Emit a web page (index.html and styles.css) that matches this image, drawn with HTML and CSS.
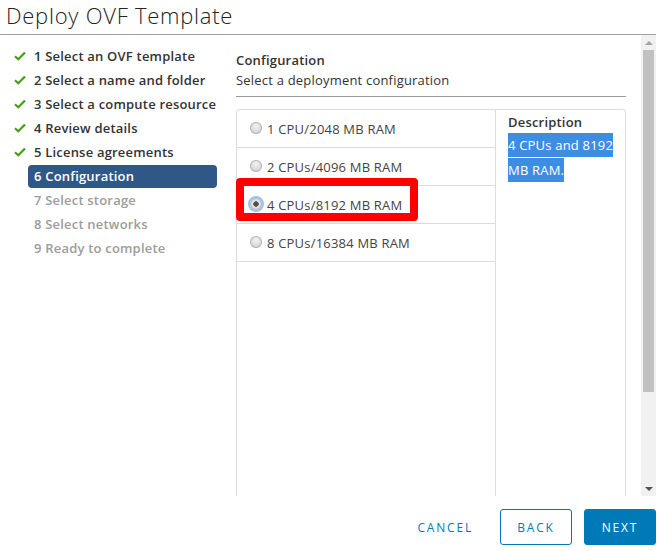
FILE: index.html
```html
<!DOCTYPE html>
<html>
<head>
<meta charset="utf-8">
<link rel="stylesheet" href="styles.css">
</head>
<body>
<div class="dialog">
  <header class="title">Deploy OVF Template</header>
  <div class="main">
    <nav class="steps">
      <div class="step done"><span class="ico"><svg width="12" height="10" viewBox="0 0 12 10"><path d="M1 5.2 L4.3 8.3 L11 1.4" fill="none" stroke="#4a9d17" stroke-width="2.2"/></svg></span><span class="lbl">1 Select an OVF template</span></div>
      <div class="step done"><span class="ico"><svg width="12" height="10" viewBox="0 0 12 10"><path d="M1 5.2 L4.3 8.3 L11 1.4" fill="none" stroke="#4a9d17" stroke-width="2.2"/></svg></span><span class="lbl">2 Select a name and folder</span></div>
      <div class="step done"><span class="ico"><svg width="12" height="10" viewBox="0 0 12 10"><path d="M1 5.2 L4.3 8.3 L11 1.4" fill="none" stroke="#4a9d17" stroke-width="2.2"/></svg></span><span class="lbl">3 Select a compute resource</span></div>
      <div class="step done"><span class="ico"><svg width="12" height="10" viewBox="0 0 12 10"><path d="M1 5.2 L4.3 8.3 L11 1.4" fill="none" stroke="#4a9d17" stroke-width="2.2"/></svg></span><span class="lbl">4 Review details</span></div>
      <div class="step done"><span class="ico"><svg width="12" height="10" viewBox="0 0 12 10"><path d="M1 5.2 L4.3 8.3 L11 1.4" fill="none" stroke="#4a9d17" stroke-width="2.2"/></svg></span><span class="lbl">5 License agreements</span></div>
      <div class="step active"><span class="ico"></span><span class="lbl">6 Configuration</span></div>
      <div class="step todo"><span class="ico"></span><span class="lbl">7 Select storage</span></div>
      <div class="step todo"><span class="ico"></span><span class="lbl">8 Select networks</span></div>
      <div class="step todo"><span class="ico"></span><span class="lbl">9 Ready to complete</span></div>
    </nav>
    <section class="content">
      <div class="head">
        <div class="h-title">Configuration</div>
        <div class="h-sub">Select a deployment configuration</div>
      </div>
      <div class="table">
        <div class="options">
          <div class="opt"><span class="radio"></span><span>1 CPU/2048 MB RAM</span></div>
          <div class="opt"><span class="radio"></span><span>2 CPUs/4096 MB RAM</span></div>
          <div class="opt marked"><span class="radio checked"></span><span>4 CPUs/8192 MB RAM</span><span class="redbox"></span></div>
          <div class="opt"><span class="radio"></span><span>8 CPUs/16384 MB RAM</span></div>
        </div>
        <div class="desc">
          <div class="d-title">Description</div>
          <div class="d-text"><span class="sel">4 CPUs and 8192</span><br><span class="sel">MB RAM.</span></div>
        </div>
      </div>
    </section>
    <div class="scrollbar">
      <span class="arrow up"></span>
      <div class="track"><div class="thumb"></div></div>
      <span class="arrow down"></span>
    </div>
  </div>
  <footer class="actions">
    <button class="btn flat">CANCEL</button>
    <button class="btn outline">BACK</button>
    <button class="btn primary">NEXT</button>
  </footer>
</div>
</body>
</html>
```
FILE: styles.css
```css
html, body {
  margin: 0;
  padding: 0;
  background: #fff;
}
body {
  font-family: "Open Sans", "Liberation Sans", sans-serif;
  color: #333;
}
.dialog {
  width: 656px;
  display: flex;
  flex-direction: column;
}
.title {
  height: 34px;
  border-bottom: 1px solid #a0a0a0;
  padding-left: 6px;
  font-size: 22px;
  font-weight: 300;
  letter-spacing: 0.75px;
  line-height: 30px;
  color: #222;
}
.main {
  height: 461px;
  display: flex;
  overflow: hidden;
}
.steps {
  width: 236px;
  flex: none;
  padding-top: 9px;
  box-sizing: border-box;
}
.step {
  display: flex;
  height: 24px;
  align-items: center;
}
.ico {
  width: 28px;
  flex: none;
  display: flex;
  padding-left: 14px;
  box-sizing: border-box;
}
.lbl {
  width: 189px;
  height: 23px;
  line-height: 23px;
  padding-left: 6px;
  box-sizing: border-box;
  font-size: 13px;
  font-weight: 600;
  letter-spacing: 0.2px;
  border-radius: 4px;
  color: #333;
}
.active .lbl {
  background: #2f5886;
  color: #fff;
}
.todo .lbl {
  color: #9c9c9c;
}
.content {
  width: 390px;
  flex: none;
  padding-top: 15px;
  letter-spacing: 0.2px;
}
.head {
  border-bottom: 1px solid #9a9a9a;
  padding-bottom: 6px;
}
.h-title {
  font-size: 13px;
  font-weight: 600;
  line-height: 20px;
  color: #333;
}
.h-sub {
  font-size: 13px;
  line-height: 20px;
  color: #333;
}
.table {
  margin-top: 12px;
  border: 1px solid #dcdcdc;
  border-radius: 3px;
  height: 420px;
  display: flex;
}
.options {
  width: 258px;
  border-right: 1px solid #dcdcdc;
  flex: none;
}
.opt {
  position: relative;
  height: 37px;
  border-bottom: 1px solid #dcdcdc;
  display: flex;
  align-items: center;
  gap: 5px;
  padding-left: 13px;
  font-size: 13px;
  color: #444;
}
.radio {
  width: 12px;
  height: 12px;
  border-radius: 50%;
  background: radial-gradient(circle at 50% 35%, #f2f2f2 0%, #dadada 55%, #c4c4c4 100%);
  box-shadow: inset 0 0 0 1px #b8b8b8;
  flex: none;
  margin-top: -2px;
}
.radio.checked {
  background: radial-gradient(circle, #555 0, #555 2.5px, #e6e6e6 3px, #cfcfcf 100%);
  outline: 2px solid #9cc3f0;
  outline-offset: 0;
  border-radius: 50%;
}
.redbox {
  position: absolute;
  left: -1px;
  top: -8px;
  width: 182px;
  height: 43px;
  box-sizing: border-box;
  border: 8px solid #ff0000;
  border-radius: 4px;
}
.desc {
  flex: 1;
  padding: 2px 0 0 12px;
}
.d-title {
  font-size: 13px;
  font-weight: 600;
  line-height: 21px;
  color: #333;
}
.d-text {
  font-size: 13px;
  line-height: 0;
}
.sel {
  display: inline-block;
  line-height: 24px;
  background: #3d8ee3;
  color: #fff;
  margin-bottom: 1px;
}
.scrollbar {
  margin-left: 15px;
  width: 15px;
  flex: none;
  background: #f1f1f1;
  display: flex;
  flex-direction: column;
  align-items: center;
}
.arrow {
  width: 0;
  height: 0;
  border-left: 4px solid transparent;
  border-right: 4px solid transparent;
  margin: 6px 0 5px;
}
.arrow.up {
  border-bottom: 4px solid #a3a3a3;
}
.arrow.down {
  border-top: 4px solid #505050;
}
.track {
  flex: 1;
  width: 11px;
}
.thumb {
  height: 342px;
  background: #c1c1c1;
}
.actions {
  display: flex;
  justify-content: flex-end;
  gap: 12px;
  padding-top: 13px;
}
.btn {
  height: 36px;
  min-width: 72px;
  padding: 0 12px;
  font-family: "Open Sans", "Liberation Sans", sans-serif;
  font-size: 12px;
  font-weight: 500;
  letter-spacing: 0.15em;
  border-radius: 3px;
  box-sizing: border-box;
  cursor: pointer;
}
.flat {
  background: transparent;
  border: none;
  color: #0079b8;
  margin-right: 3px;
}
.outline {
  background: #fff;
  border: 1px solid #0079b8;
  color: #0079b8;
}
.primary {
  background: #0079b8;
  border: 1px solid #0079b8;
  color: #fff;
}
```
